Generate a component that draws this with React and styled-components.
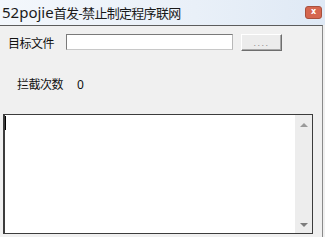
import React from "react";
import styled, { createGlobalStyle } from "styled-components";

const Global = createGlobalStyle`
  html, body { margin: 0; padding: 0; background: #f0f0f0; }
  body { font-family: "Noto Sans", "Noto Sans CJK SC", sans-serif; }
`;

const Window = styled.div`
  width: 325px;
  height: 237px;
  display: flex;
  flex-direction: column;
  background: #f0f0f0;
  overflow: hidden;
`;

const TitleBar = styled.div`
  height: 25px;
  flex: none;
  display: flex;
  align-items: center;
  justify-content: space-between;
  padding-left: 2px;
  background: linear-gradient(to right, #f3f7fc, #e9f0f8 60%, #dfe9f5);
`;

const Title = styled.div`
  display: flex;
  align-items: baseline;
  color: #1a1a1a;
  white-space: nowrap;
  margin-top: -1px;
`;

const Latin = styled.span`
  font-family: "Noto Sans", "DejaVu Sans", sans-serif;
  font-size: 15px;
`;

const Cjk = styled.span`
  font-family: "Noto Sans CJK SC", sans-serif;
  font-size: 13px;
  letter-spacing: -0.7px;
`;

const CloseButton = styled.div`
  width: 17px;
  height: 13px;
  margin-right: 3px;
  margin-top: -1px;
  box-sizing: border-box;
  border: 1px solid #a8503d;
  border-radius: 3px;
  background-color: #d5664f;
  display: flex;
  align-items: center;
  justify-content: center;
  color: #ffffff;
  font-family: "DejaVu Sans", sans-serif;
  font-weight: bold;
  font-size: 8px;
  line-height: 1;
`;

const Client = styled.div`
  flex: 1;
  width: 323px;
  box-sizing: border-box;
  border-top: 1px solid #5c5c5c;
  border-right: 1px solid #8a8a8a;
  display: flex;
  flex-direction: column;
  padding-top: 8px;
`;

const FileRow = styled.div`
  display: flex;
  align-items: center;
  padding-left: 8px;
  height: 17px;
`;

const Label = styled.span`
  font-family: "Noto Sans CJK SC", sans-serif;
  font-size: 12px;
  letter-spacing: -0.5px;
  color: #111;
  line-height: 16px;
`;

const PathInput = styled.div`
  width: 167px;
  height: 16px;
  margin-left: 12px;
  box-sizing: border-box;
  background: #fff;
  border: 1px solid #7a7a7a;
  border-right-color: #b8b8b8;
  border-bottom-color: #c8c8c8;
  align-self: flex-start;
`;

const BrowseButton = styled.div`
  width: 41px;
  height: 17px;
  margin-left: 8px;
  box-sizing: border-box;
  background: #ececec;
  border: 1px solid #fff;
  border-right-color: #6e6e6e;
  border-bottom-color: #6e6e6e;
  box-shadow: inset -1px -1px 0 #a8a8a8;
  display: flex;
  align-items: center;
  justify-content: center;
  color: #8a8a8a;
  font-family: "Liberation Sans", sans-serif;
  font-size: 9px;
  letter-spacing: 1.5px;
`;

const CountRow = styled.div`
  display: flex;
  align-items: center;
  padding-left: 17px;
  margin-top: 25px;
  height: 16px;
`;

const CountValue = styled.span`
  margin-left: 14px;
  font-family: "Noto Sans", sans-serif;
  font-size: 12px;
  color: #111;
`;

const LogBox = styled.div`
  margin: 22px 0 0 3px;
  width: 310px;
  height: 120px;
  box-sizing: border-box;
  border: 1px solid #3c3c3c;
  border-left-width: 2px;
  display: flex;
  background: #fff;
`;

const LogText = styled.div`
  flex: 1;
  position: relative;
  background: #fff;
`;

const Caret = styled.div`
  position: absolute;
  left: 0;
  top: 1px;
  width: 1px;
  height: 14px;
  background: #000;
`;

const ScrollBar = styled.div`
  width: 17px;
  display: flex;
  flex-direction: column;
  justify-content: space-between;
  align-items: center;
  background: #ededed;
  padding: 8px 0 6px;
  box-sizing: border-box;
`;

const Arrow = styled.div`
  width: 0;
  height: 0;
  border-left: 4px solid transparent;
  border-right: 4px solid transparent;
  ${(p) =>
    p.$down
      ? "border-top: 4px solid #7d7d7d;"
      : "border-bottom: 4px solid #9a9a9a;"}
`;

export default function App() {
  return (
    <>
      <Global />
      <Window>
        <TitleBar>
          <Title>
            <Latin>52pojie</Latin>
            <Cjk>首发-禁止制定程序联网</Cjk>
          </Title>
          <CloseButton>x</CloseButton>
        </TitleBar>
        <Client>
          <FileRow>
            <Label>目标文件</Label>
            <PathInput />
            <BrowseButton>....</BrowseButton>
          </FileRow>
          <CountRow>
            <Label>拦截次数</Label>
            <CountValue>0</CountValue>
          </CountRow>
          <LogBox>
            <LogText>
              <Caret />
            </LogText>
            <ScrollBar>
              <Arrow />
              <Arrow $down />
            </ScrollBar>
          </LogBox>
        </Client>
      </Window>
    </>
  );
}
